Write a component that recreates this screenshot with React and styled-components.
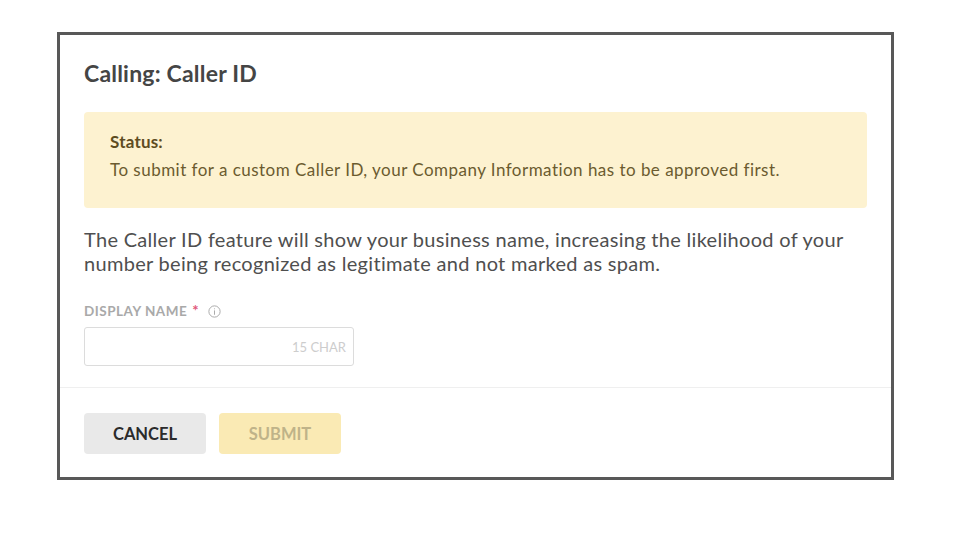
import React from 'react';
import styled, { createGlobalStyle } from 'styled-components';

const GlobalStyle = createGlobalStyle`
    body {
        margin: 0;
        background: #fff;
        font-family: Lato, "Open Sans", sans-serif;
    }
`;

const Page = styled.div`
    padding: 32px 66px 0 57px;
`;

const Dialog = styled.div`
    width: 837px;
    box-sizing: border-box;
    border: 3px solid #585858;
    background: #fff;
`;

const Body = styled.div`
    padding: 24px 24px 21px;
`;

const Title = styled.h2`
    margin: 0;
    font-size: 23px;
    font-weight: 700;
    color: #454545;
    letter-spacing: 0.2px;
    line-height: 28px;
`;

const Notice = styled.div`
    margin-top: 25px;
    background: #fdf2d0;
    border-radius: 4px;
    padding: 16px 26px 24px;
    color: #6b5b2f;
    font-size: 17px;
    letter-spacing: 0.47px;
    line-height: 28px;
`;

const NoticeTitle = styled.div`
    font-weight: 700;
    letter-spacing: 0.2px;
    color: #5e4c1f;
`;

const Description = styled.p`
    margin: 19px 0 0;
    font-size: 20px;
    letter-spacing: 0.3px;
    line-height: 24px;
    color: #4f4f4f;
`;

const Label = styled.div`
    margin-top: 28px;
    display: flex;
    align-items: center;
    gap: 5px;
    font-size: 13.5px;
    font-weight: 700;
    color: #a9a9a9;
    text-transform: uppercase;
    letter-spacing: 0.5px;
    height: 16px;
`;

const Required = styled.span`
    color: #e0577a;
    font-size: 15px;
    align-self: flex-start;
    margin-top: -2px;
`;

const InfoIcon = styled.svg`
    margin-left: 4px;
    width: 13px;
    height: 13px;
`;

const InputBox = styled.div`
    margin-top: 8px;
    width: 270px;
    height: 39px;
    box-sizing: border-box;
    border: 1px solid #dcdcdc;
    border-radius: 3px;
    display: flex;
    align-items: center;
    justify-content: flex-end;
    padding-right: 7px;
`;

const Counter = styled.span`
    font-size: 13px;
    color: #cdcdcd;
`;

const Footer = styled.div`
    border-top: 1px solid #efefef;
    padding: 25px 24px 23px;
    display: flex;
    gap: 13px;
`;

const Button = styled.button`
    width: 122px;
    height: 41px;
    border: none;
    border-radius: 4px;
    font-family: Lato, sans-serif;
    font-size: 16.5px;
    font-weight: 700;
    background: ${p => (p.$primary ? '#faeab4' : '#e9e9e9')};
    color: ${p => (p.$primary ? '#bfb389' : '#2b2b2b')};
`;

const App = () => (
    <>
        <GlobalStyle />
        <Page>
            <Dialog>
                <Body>
                    <Title>Calling: Caller ID</Title>
                    <Notice>
                        <NoticeTitle>Status:</NoticeTitle>
                        <div>To submit for a custom Caller ID, your Company Information has to be approved first.</div>
                    </Notice>
                    <Description>
                        The Caller ID feature will show your business name, increasing the likelihood of your
                        number being recognized as legitimate and not marked as spam.
                    </Description>
                    <Label>
                        Display Name <Required>*</Required>
                        <InfoIcon viewBox="0 0 12 12" fill="none" stroke="#a9a9a9" strokeWidth="0.9">
                            <circle cx="6" cy="6" r="5.2" />
                            <line x1="6" y1="5" x2="6" y2="9" />
                            <circle cx="6" cy="3.4" r="0.5" fill="#a9a9a9" stroke="none" />
                        </InfoIcon>
                    </Label>
                    <InputBox>
                        <Counter>15 CHAR</Counter>
                    </InputBox>
                </Body>
                <Footer>
                    <Button>CANCEL</Button>
                    <Button $primary>SUBMIT</Button>
                </Footer>
            </Dialog>
        </Page>
    </>
);

export default App;
